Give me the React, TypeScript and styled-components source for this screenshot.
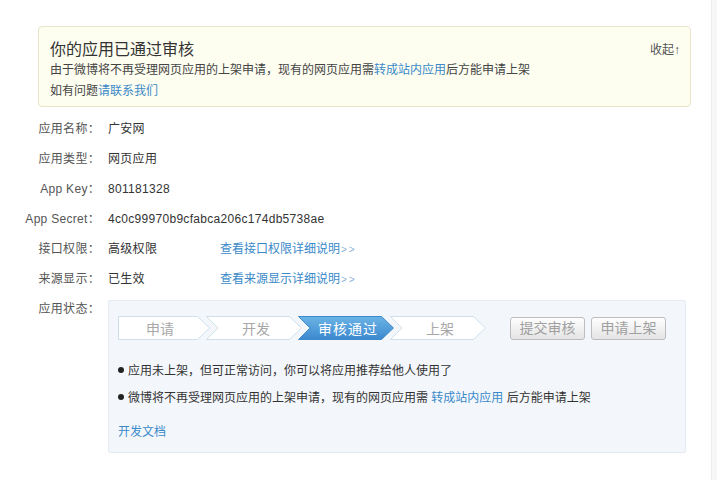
import React from "react";
import styled, { createGlobalStyle } from "styled-components";

const Global = createGlobalStyle`
  html, body { margin: 0; padding: 0; background: #fff; }
  body { font-family: "Liberation Sans", "Noto Sans CJK SC", sans-serif; font-size: 12px; color: #333; }
`;

const Page = styled.div`
  display: flex;
  height: 480px;
  width: 717px;
  overflow: hidden;
`;

const Main = styled.div`
  flex: 1;
  padding-top: 26px;
`;

const Gutter = styled.div`
  width: 5px;
  background: #f7f7f7;
  border-left: 1px solid #ececec;
`;

const Notice = styled.div`
  margin-left: 38px;
  width: 653px;
  height: 81px;
  box-sizing: border-box;
  background: #fdfdf0;
  border: 1px solid #e9e5cc;
  border-radius: 4px;
  padding: 9px 10px 0 11px;
`;

const NoticeHead = styled.div`
  display: flex;
  justify-content: space-between;
  align-items: center;
  height: 24px;
`;

const NoticeTitle = styled.div`
  font-size: 16px;
  color: #333;
`;

const Collapse = styled.span`
  font-size: 12px;
  color: #555;
`;

const NoticeLine = styled.div`
  line-height: 21px;
  color: #444;
`;

const Link = styled.a`
  color: #3a89c9;
  text-decoration: none;
  cursor: pointer;
`;

const Info = styled.div`
  margin-top: 7px;
`;

const Row = styled.div`
  display: flex;
  align-items: flex-start;
  line-height: 30px;
  height: 30px;
`;

const Label = styled.div`
  width: 100px;
  text-align: right;
  color: #555;
  letter-spacing: 0.3px;
  flex-shrink: 0;
`;

const Value = styled.div<{ $w?: number }>`
  margin-left: 8px;
  color: #333;
  width: ${(p) => (p.$w ? `${p.$w}px` : "auto")};
  letter-spacing: 0.3px;
`;

const More = styled.span`
  font-size: 10px;
  color: #8cb3d8;
  letter-spacing: 2px;
  margin-left: 1px;
`;

const StatusRow = styled.div`
  display: flex;
  align-items: flex-start;
  line-height: 30px;
`;

const Panel = styled.div`
  margin: 6px 0 0 8px;
  width: 578px;
  box-sizing: border-box;
  background: #f3f7fb;
  border: 1px solid #e4ebf2;
  border-radius: 2px;
  padding: 15px 19px 10px 9px;
  line-height: normal;
`;

const StepBar = styled.div`
  display: flex;
  align-items: center;
`;

const Steps = styled.div`
  display: flex;
`;

const Step = styled.div<{ $first?: boolean; $active?: boolean }>`
  position: relative;
  width: ${(p) => (p.$first ? 92 : 96)}px;
  height: 24px;
  margin-left: ${(p) => (p.$first ? 0 : -4)}px;
  display: flex;
  align-items: center;
  justify-content: center;
  padding-left: ${(p) => (p.$first ? 0 : 4)}px;
  padding-right: ${(p) => (p.$first ? 8 : 0)}px;
  box-sizing: border-box;
  font-size: 14px;
  letter-spacing: ${(p) => (p.$active ? 1 : 0)}px;
  color: ${(p) => (p.$active ? "#fff" : "#a8a8a8")};
`;

const StepShape = styled.svg`
  position: absolute;
  inset: 0;
`;

const StepText = styled.span`
  position: relative;
`;

const Buttons = styled.div`
  margin-left: auto;
  display: flex;
  gap: 6px;
`;

const Btn = styled.button`
  width: 75px;
  height: 23px;
  box-sizing: border-box;
  border: 1px solid #bdbdbd;
  border-radius: 3px;
  background: linear-gradient(#fefefe, #e4e4e4);
  font-family: inherit;
  font-size: 14px;
  color: #a0a0a0;
  padding: 0;
  line-height: 21px;
`;

const Bullets = styled.ul`
  list-style: none;
  margin: 16px 0 0;
  padding: 0;
`;

const Bullet = styled.li`
  display: flex;
  align-items: center;
  height: 27px;
  color: #333;
  &::before {
    content: "";
    width: 6px;
    height: 6px;
    border-radius: 50%;
    background: #222;
    margin-right: 4px;
  }
`;

const DocLink = styled(Link)`
  display: block;
  margin-top: 12px;
  line-height: 20px;
`;

const steps = ["申请", "开发", "审核通过", "上架"];

function StepItem({ label, index, active }: { label: string; index: number; active: boolean }) {
  const first = index === 0;
  const w = first ? 92 : 96;
  const pts = first
    ? `0.5,0.5 ${w - 12.5},0.5 ${w - 0.5},12 ${w - 12.5},23.5 0.5,23.5`
    : `0.5,0.5 ${w - 12.5},0.5 ${w - 0.5},12 ${w - 12.5},23.5 0.5,23.5 12,12`;
  return (
    <Step $first={first} $active={active}>
      <StepShape width={w} height={24} viewBox={`0 0 ${w} 24`}>
        <defs>
          <linearGradient id={`sg${index}`} x1="0" y1="0" x2="0" y2="1">
            <stop offset="0" stopColor="#6cb4e6" />
            <stop offset="1" stopColor="#3b88cf" />
          </linearGradient>
        </defs>
        <polygon
          points={pts}
          fill={active ? `url(#sg${index})` : "#fff"}
          stroke={active ? "#3f8acb" : "#cfdfec"}
          strokeWidth={1}
        />
      </StepShape>
      <StepText>{label}</StepText>
    </Step>
  );
}

export default function App() {
  return (
    <Page>
      <Global />
      <Main>
        <Notice>
          <NoticeHead>
            <NoticeTitle>你的应用已通过审核</NoticeTitle>
            <Collapse>收起↑</Collapse>
          </NoticeHead>
          <NoticeLine>
            由于微博将不再受理网页应用的上架申请，现有的网页应用需<Link>转成站内应用</Link>后方能申请上架
          </NoticeLine>
          <NoticeLine>
            如有问题<Link>请联系我们</Link>
          </NoticeLine>
        </Notice>
        <Info>
          <Row>
            <Label>应用名称：</Label>
            <Value>广安网</Value>
          </Row>
          <Row>
            <Label>应用类型：</Label>
            <Value>网页应用</Value>
          </Row>
          <Row>
            <Label>App Key：</Label>
            <Value>801181328</Value>
          </Row>
          <Row>
            <Label>App Secret：</Label>
            <Value>4c0c99970b9cfabca206c174db5738ae</Value>
          </Row>
          <Row>
            <Label>接口权限：</Label>
            <Value $w={112}>高级权限</Value>
            <Link>
              查看接口权限详细说明<More>&gt;&gt;</More>
            </Link>
          </Row>
          <Row>
            <Label>来源显示：</Label>
            <Value $w={112}>已生效</Value>
            <Link>
              查看来源显示详细说明<More>&gt;&gt;</More>
            </Link>
          </Row>
          <StatusRow>
            <Label>应用状态：</Label>
            <Panel>
              <StepBar>
                <Steps>
                  {steps.map((s, i) => (
                    <StepItem key={s} label={s} index={i} active={i === 2} />
                  ))}
                </Steps>
                <Buttons>
                  <Btn disabled>提交审核</Btn>
                  <Btn disabled>申请上架</Btn>
                </Buttons>
              </StepBar>
              <Bullets>
                <Bullet>应用未上架，但可正常访问，你可以将应用推荐给他人使用了</Bullet>
                <Bullet>
                  微博将不再受理网页应用的上架申请，现有的网页应用需&nbsp;<Link>转成站内应用</Link>&nbsp;后方能申请上架
                </Bullet>
              </Bullets>
              <DocLink>开发文档</DocLink>
            </Panel>
          </StatusRow>
        </Info>
      </Main>
      <Gutter />
    </Page>
  );
}
